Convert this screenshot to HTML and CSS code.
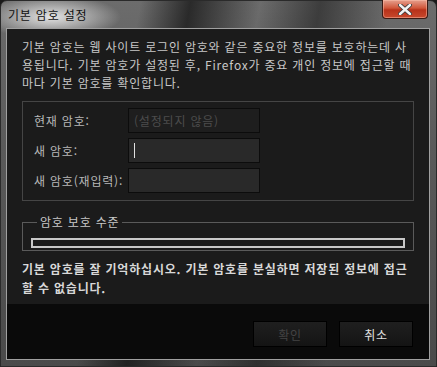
FILE: index.html
```html
<!DOCTYPE html>
<html lang="ko">
<head>
    <meta charset="UTF-8">
    <title>기본 암호 설정</title>
    <link rel="stylesheet" href="styles.css">
</head>
<body>
    <div class="window">
        <div class="title-bar">
            <span class="title">기본 암호 설정</span>
            <button class="close-btn" type="button" aria-label="닫기">
                <svg width="14" height="11" viewBox="0 0 14 11">
                    <path d="M2 1 L12 10 M12 1 L2 10" stroke="#3a3a3a" stroke-width="4.2" stroke-linecap="round"/>
                    <path d="M2 1 L12 10 M12 1 L2 10" stroke="#f2f2f2" stroke-width="2.4" stroke-linecap="round"/>
                </svg>
            </button>
        </div>

        <div class="client">
            <div class="content">
                <p class="intro">기본 암호는 웹 사이트 로그인 암호와 같은 중요한 정보를 보호하는데 사용됩니다. 기본 암호가 설정된 후, Firefox가 중요 개인 정보에 접근할 때마다 기본 암호를 확인합니다.</p>

                <div class="fields">
                    <label class="field-label" for="oldpw">현재 암호:</label>
                    <input class="field-input" id="oldpw" type="password" placeholder="(설정되지 않음)" disabled>

                    <label class="field-label" for="pw1">새 암호:</label>
                    <div class="field-input active"><span class="caret"></span></div>

                    <label class="field-label" for="pw2">새 암호(재입력):</label>
                    <input class="field-input" id="pw2" type="password">
                </div>

                <fieldset class="meter">
                    <legend>암호 보호 수준</legend>
                    <div class="meter-bar"></div>
                </fieldset>

                <p class="warning">기본 암호를 잘 기억하십시오. 기본 암호를 분실하면 저장된 정보에 접근할 수 없습니다.</p>
            </div>

            <div class="actions">
                <button class="btn" type="button" disabled>확인</button>
                <button class="btn" type="button">취소</button>
            </div>
        </div>
    </div>
</body>
</html>
```

FILE: styles.css
```css
* {
    margin: 0;
    padding: 0;
    box-sizing: border-box;
}

body {
    font-family: "Noto Sans CJK KR", "Noto Sans", sans-serif;
    font-size: 12px;
    letter-spacing: 0.8px;
    width: 437px;
    height: 367px;
    overflow: hidden;
    background: #1a1a1a;
}

.window {
    width: 437px;
    height: 367px;
    display: flex;
    flex-direction: column;
    padding: 0 6px 6px 5px;
    border-radius: 7px 7px 0 0;
    background:
        radial-gradient(ellipse 70px 22px at 50px 16px, rgba(235, 235, 235, 0.95), rgba(235, 235, 235, 0) 100%),
        linear-gradient(100deg, rgba(0,0,0,0) 28%, rgba(20,20,20,0.75) 38%, rgba(0,0,0,0) 52%, rgba(30,30,30,0.6) 64%, rgba(0,0,0,0) 78%),
        linear-gradient(180deg, #6c6c6c 0%, #5a5a5a 40%, #4a4a4a 100%);
    border: 1px solid #2a2a2a;
}

.title-bar {
    height: 27px;
    display: flex;
    justify-content: space-between;
    align-items: flex-start;
    flex-shrink: 0;
}

.title {
    margin: 6px 0 0 2px;
    font-size: 12px;
    color: #111;
    line-height: 16px;
}

.close-btn {
    width: 46px;
    height: 19px;
    margin-right: 2px;
    margin-top: -1px;
    border: 1px solid #3a1a14;
    border-top: none;
    border-radius: 0 0 4px 4px;
    background: linear-gradient(180deg, #e6a08e 0%, #d0563a 45%, #b8321a 55%, #c8482c 100%);
    box-shadow: inset 0 0 0 1px rgba(255, 200, 180, 0.45);
    display: flex;
    align-items: center;
    justify-content: center;
}

.client {
    flex: 1;
    display: flex;
    flex-direction: column;
    border: 1px solid #a0a0a0;
    background: #0a0a0a;
}

.content {
    background: #1b1b1b;
    padding: 9px 15px 0 15px;
    height: 275px;
}

.intro {
    color: #c8c8c8;
    line-height: 18px;
}

.fields {
    margin-top: 9px;
    border: 1px solid #454545;
    height: 100px;
    padding: 6px 0 0 11px;
    display: grid;
    grid-template-columns: 94px 132px;
    grid-auto-rows: 25px;
    row-gap: 5px;
    align-items: center;
}

.field-label {
    color: #b8b8b8;
}

.field-input {
    height: 25px;
    width: 132px;
    border: 1px solid #0c0c0c;
    background: #292929;
    font-family: inherit;
    font-size: 12px;
    letter-spacing: 0.8px;
    padding: 0 5px;
    color: #ddd;
    outline: none;
}

.field-input:disabled {
    background: #1e1e1e;
}

.field-input::placeholder {
    color: #4c4c4c;
}

.field-input.active {
    display: flex;
    align-items: center;
}

.caret {
    width: 1px;
    height: 15px;
    background: #e0e0e0;
}

.meter {
    margin-top: 14px;
    border: 1px solid #5a5a5a;
    height: 36px;
    padding: 0 8px;
}

.meter legend {
    color: #c8c8c8;
    padding: 0 3px;
    margin-left: 6px;
    line-height: 14px;
}

.meter-bar {
    margin-top: 9px;
    height: 10px;
    border: 2px solid #c8c8c8;
    background: #1b1b1b;
}

.warning {
    margin-top: 8px;
    color: #d8d8d8;
    font-weight: bold;
    line-height: 19px;
}

.actions {
    flex: 1;
    display: flex;
    justify-content: flex-end;
    align-items: flex-start;
    gap: 12px;
    padding: 17px 16px 0 0;
}

.btn {
    width: 74px;
    height: 26px;
    border: 1px solid #000;
    background: linear-gradient(180deg, #1f1f1f 0%, #141414 100%);
    color: #e0e0e0;
    font-family: inherit;
    font-size: 12px;
    letter-spacing: 0.8px;
}

.btn:disabled {
    color: #444;
}
```
